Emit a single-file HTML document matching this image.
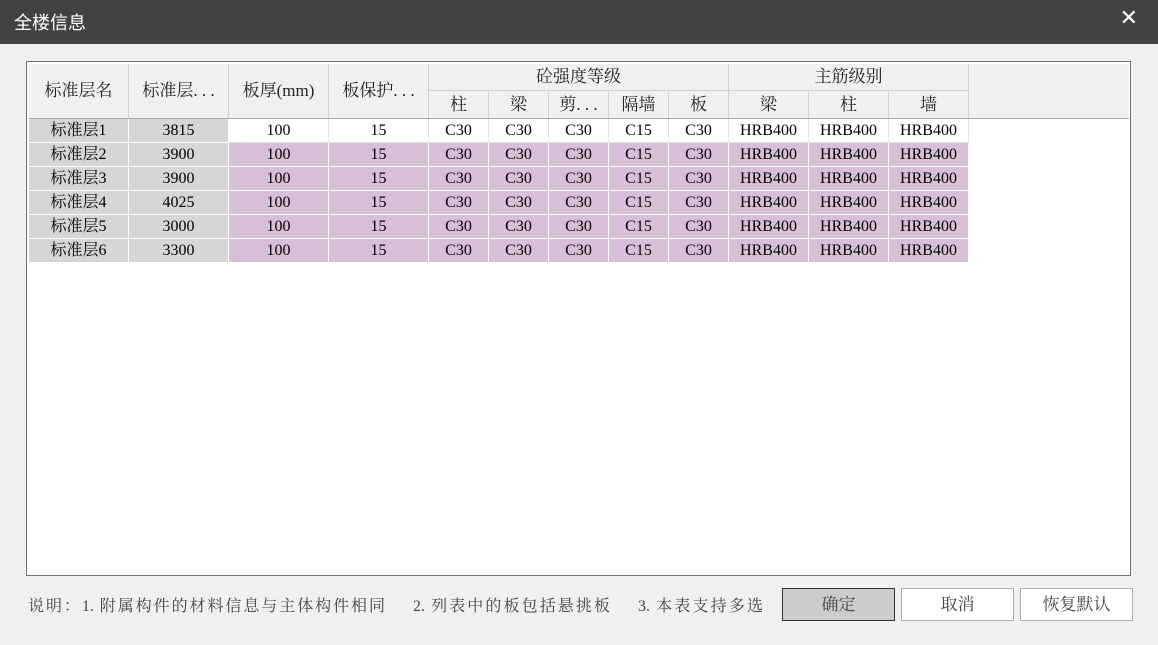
<!DOCTYPE html>
<html><head><meta charset="utf-8"><style>
*{margin:0;padding:0;box-sizing:border-box}
body{width:1158px;height:645px;background:#f0f0f0;position:relative;overflow:hidden;font-family:"Liberation Serif","Noto Serif CJK SC",serif;font-size:16px;color:#000}
.title{position:absolute;left:0;top:0;width:1158px;height:44px;background:#424242;color:#fff;font-family:"Liberation Sans","Noto Sans CJK SC",sans-serif;font-size:18px;line-height:46px;padding-left:14px}
.x{position:absolute;right:20px;top:1px;line-height:36px;font-size:22px;color:#fff;font-family:"DejaVu Sans",sans-serif;font-weight:bold}
.frame{position:absolute;left:26px;top:61px;width:1105px;height:515px;border:1px solid #707070;background:#fff}
.hd{position:absolute;left:2px;top:2px;width:1100px;height:55px;background:#f0f0f0;border-bottom:1px solid #a8a8a8}
.c{position:absolute;text-align:center;border-right:1px solid #d0d0d0;color:#222;font-size:17px}
.row{position:absolute;left:2px;display:flex;height:24px}
.row div{height:24px;line-height:24px;text-align:center;border-right:1px solid #fff;border-bottom:1px solid #fff}
.g{background:#d6d6d6}.p{background:#d8bfd8}.w{background:#fff;border-color:#e4e4e4!important}
.n{position:absolute;top:593px;color:#444;font-size:16px;display:inline-block;text-align:justify;text-align-last:justify;white-space:nowrap}
.btn{position:absolute;top:588px;width:113px;height:33px;border:1px solid #adadad;background:#fff;text-align:center;line-height:31px;color:#444;font-size:17px}
</style></head><body>
<div class="title">全楼信息</div><div class="x">✕</div>
<div class="frame">
<div class="hd">
<div class="c" style="left:0;top:0;width:100px;height:54px;line-height:54px">标准层名</div>
<div class="c" style="left:100px;top:0;width:100px;height:54px;line-height:54px">标准层. . .</div>
<div class="c" style="left:200px;top:0;width:100px;height:54px;line-height:54px">板厚(mm)</div>
<div class="c" style="left:300px;top:0;width:100px;height:54px;line-height:54px">板保护. . .</div>
<div class="c" style="left:400px;top:0;width:300px;height:27px;line-height:26px;border-bottom:1px solid #d0d0d0">砼强度等级</div>
<div class="c" style="left:700px;top:0;width:240px;height:27px;line-height:26px;border-bottom:1px solid #d0d0d0">主筋级别</div>
<div class="c" style="left:400px;top:27px;width:60px;height:27px;line-height:27px">柱</div>
<div class="c" style="left:460px;top:27px;width:60px;height:27px;line-height:27px">梁</div>
<div class="c" style="left:520px;top:27px;width:60px;height:27px;line-height:27px">剪. . .</div>
<div class="c" style="left:580px;top:27px;width:60px;height:27px;line-height:27px">隔墙</div>
<div class="c" style="left:640px;top:27px;width:60px;height:27px;line-height:27px">板</div>
<div class="c" style="left:700px;top:27px;width:80px;height:27px;line-height:27px">梁</div>
<div class="c" style="left:780px;top:27px;width:80px;height:27px;line-height:27px">柱</div>
<div class="c" style="left:860px;top:27px;width:80px;height:27px;line-height:27px">墙</div>
</div>
<div class="row" style="top:57px"><div class="g" style="width:100px">标准层1</div><div class="g" style="width:100px">3815</div><div class="w" style="width:100px">100</div><div class="w" style="width:100px">15</div><div class="w" style="width:60px">C30</div><div class="w" style="width:60px">C30</div><div class="w" style="width:60px">C30</div><div class="w" style="width:60px">C15</div><div class="w" style="width:60px">C30</div><div class="w" style="width:80px">HRB400</div><div class="w" style="width:80px">HRB400</div><div class="w" style="width:80px">HRB400</div></div>
<div class="row" style="top:81px"><div class="g" style="width:100px">标准层2</div><div class="g" style="width:100px">3900</div><div class="p" style="width:100px">100</div><div class="p" style="width:100px">15</div><div class="p" style="width:60px">C30</div><div class="p" style="width:60px">C30</div><div class="p" style="width:60px">C30</div><div class="p" style="width:60px">C15</div><div class="p" style="width:60px">C30</div><div class="p" style="width:80px">HRB400</div><div class="p" style="width:80px">HRB400</div><div class="p" style="width:80px">HRB400</div></div>
<div class="row" style="top:105px"><div class="g" style="width:100px">标准层3</div><div class="g" style="width:100px">3900</div><div class="p" style="width:100px">100</div><div class="p" style="width:100px">15</div><div class="p" style="width:60px">C30</div><div class="p" style="width:60px">C30</div><div class="p" style="width:60px">C30</div><div class="p" style="width:60px">C15</div><div class="p" style="width:60px">C30</div><div class="p" style="width:80px">HRB400</div><div class="p" style="width:80px">HRB400</div><div class="p" style="width:80px">HRB400</div></div>
<div class="row" style="top:129px"><div class="g" style="width:100px">标准层4</div><div class="g" style="width:100px">4025</div><div class="p" style="width:100px">100</div><div class="p" style="width:100px">15</div><div class="p" style="width:60px">C30</div><div class="p" style="width:60px">C30</div><div class="p" style="width:60px">C30</div><div class="p" style="width:60px">C15</div><div class="p" style="width:60px">C30</div><div class="p" style="width:80px">HRB400</div><div class="p" style="width:80px">HRB400</div><div class="p" style="width:80px">HRB400</div></div>
<div class="row" style="top:153px"><div class="g" style="width:100px">标准层5</div><div class="g" style="width:100px">3000</div><div class="p" style="width:100px">100</div><div class="p" style="width:100px">15</div><div class="p" style="width:60px">C30</div><div class="p" style="width:60px">C30</div><div class="p" style="width:60px">C30</div><div class="p" style="width:60px">C15</div><div class="p" style="width:60px">C30</div><div class="p" style="width:80px">HRB400</div><div class="p" style="width:80px">HRB400</div><div class="p" style="width:80px">HRB400</div></div>
<div class="row" style="top:177px"><div class="g" style="width:100px">标准层6</div><div class="g" style="width:100px">3300</div><div class="p" style="width:100px">100</div><div class="p" style="width:100px">15</div><div class="p" style="width:60px">C30</div><div class="p" style="width:60px">C30</div><div class="p" style="width:60px">C30</div><div class="p" style="width:60px">C15</div><div class="p" style="width:60px">C30</div><div class="p" style="width:80px">HRB400</div><div class="p" style="width:80px">HRB400</div><div class="p" style="width:80px">HRB400</div></div>
</div>
<div class="n" style="left:28px;width:357px">说明：1. 附属构件的材料信息与主体构件相同</div>
<div class="n" style="left:413px;width:197px">2. 列表中的板包括悬挑板</div>
<div class="n" style="left:638px;width:125px">3. 本表支持多选</div>
<div class="btn" style="left:782px;background:#ccc;border-color:#333">确定</div>
<div class="btn" style="left:901px">取消</div>
<div class="btn" style="left:1020px">恢复默认</div>
</body></html>
